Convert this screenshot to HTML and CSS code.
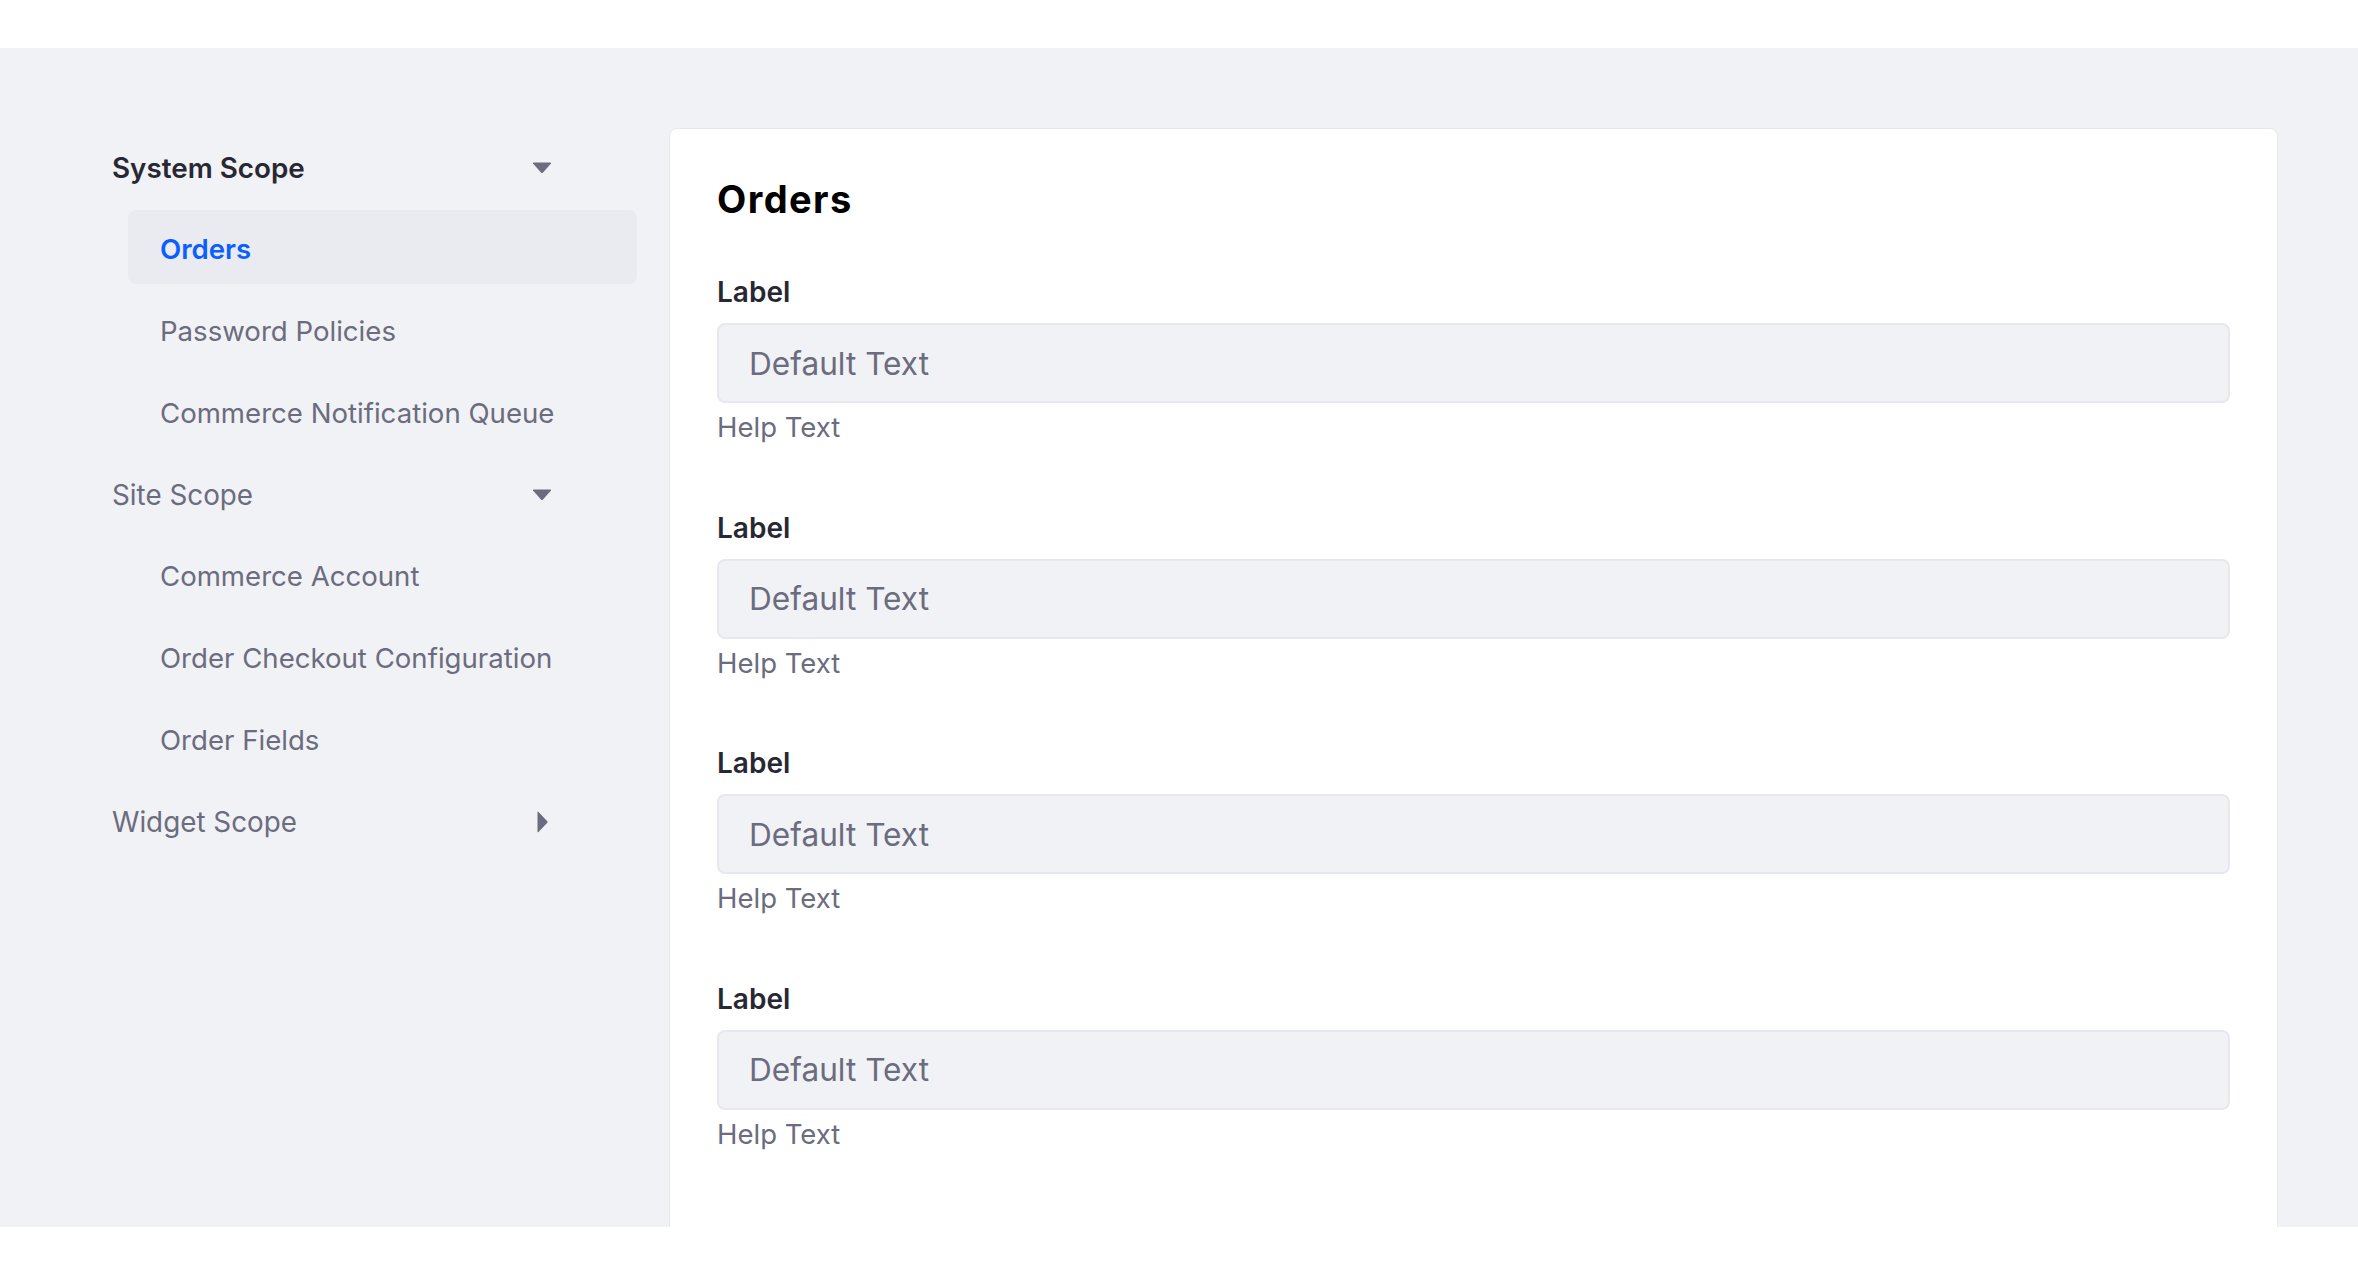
FILE: index.html
```html
<!DOCTYPE html>
<html lang="en">
<head>
<meta charset="utf-8">
<title>Orders</title>
<link rel="stylesheet" href="styles.css">
</head>
<body>
<div class="page">
  <nav class="sidebar">
    <div class="group-header active">
      <span>System Scope</span>
      <svg class="caret" width="20" height="12" viewBox="0 0 20 12"><path d="M1 1.5 Q0.6 0.5 1.8 0.5 H18.2 Q19.4 0.5 19 1.5 L10.8 10.8 Q10 11.6 9.2 10.8 Z" fill="#6b6c7e"/></svg>
    </div>
    <ul class="group-items">
      <li class="item selected">Orders</li>
      <li class="item">Password Policies</li>
      <li class="item">Commerce Notification Queue</li>
    </ul>
    <div class="group-header">
      <span>Site Scope</span>
      <svg class="caret" width="20" height="12" viewBox="0 0 20 12"><path d="M1 1.5 Q0.6 0.5 1.8 0.5 H18.2 Q19.4 0.5 19 1.5 L10.8 10.8 Q10 11.6 9.2 10.8 Z" fill="#6b6c7e"/></svg>
    </div>
    <ul class="group-items">
      <li class="item">Commerce Account</li>
      <li class="item">Order Checkout Configuration</li>
      <li class="item">Order Fields</li>
    </ul>
    <div class="group-header">
      <span>Widget Scope</span>
      <svg class="caret" width="20" height="22" viewBox="0 0 20 22"><path d="M5.5 1.5 Q5.5 0.3 6.5 1.1 L15.3 10.2 Q16 11 15.3 11.8 L6.5 20.9 Q5.5 21.7 5.5 20.5 Z" fill="#6b6c7e"/></svg>
    </div>
  </nav>
  <main class="card">
    <h1 class="title">Orders</h1>
    <div class="field">
      <div class="label">Label</div>
      <div class="input">Default Text</div>
      <div class="help">Help Text</div>
    </div>
    <div class="field">
      <div class="label">Label</div>
      <div class="input">Default Text</div>
      <div class="help">Help Text</div>
    </div>
    <div class="field">
      <div class="label">Label</div>
      <div class="input">Default Text</div>
      <div class="help">Help Text</div>
    </div>
    <div class="field">
      <div class="label">Label</div>
      <div class="input">Default Text</div>
      <div class="help">Help Text</div>
    </div>
  </main>
</div>
</body>
</html>
```
FILE: styles.css
```css
* { box-sizing: border-box; }
html, body { margin: 0; padding: 0; background: #ffffff; }
body {
  font-family: Inter, "Noto Sans", "Liberation Sans", sans-serif;
  color: #272833;
  overflow: hidden;
}
.page {
  margin-top: 48px;
  height: 1179px;
  background: #f1f2f5;
  display: flex;
  align-items: flex-start;
  gap: 32px;
  padding: 80px 80px 0 112px;
  overflow: hidden;
}
.sidebar {
  width: 525px;
  flex: none;
}
.group-header {
  width: 440px;
  height: 74px;
  margin-bottom: 7.75px;
  padding-top: 5px;
  display: flex;
  align-items: center;
  justify-content: space-between;
  font-size: 27.8px;
  line-height: 34px;
  color: #6b6c7e;
}
.group-header.active {
  color: #272833;
  font-weight: 600;
}
.caret { display: block; }
.group-items {
  list-style: none;
  margin: 0;
  padding: 0 0 0 16px;
}
.item {
  height: 74px;
  margin-bottom: 7.75px;
  padding: 5px 0 0 32px;
  display: flex;
  align-items: center;
  border-radius: 8px;
  font-size: 27.6px;
  line-height: 34px;
  color: #6b6c7e;
}
.item.selected {
  background: #e9ebf1;
  color: #0b5fff;
  font-weight: 600;
}
.card {
  flex: 1;
  min-height: 1200px;
  background: #ffffff;
  border: 1px solid #e7e7ed;
  border-radius: 8px;
  padding: 47px 47px;
}
.title {
  margin: 2px 0 56px;
  font-size: 38px;
  line-height: 43px;
  letter-spacing: 1.4px;
  font-weight: 700;
  color: #000000;
}
.field {
  margin-bottom: 67.5px;
}
.label {
  font-size: 28px;
  line-height: 31px;
  font-weight: 600;
  color: #272833;
  margin-bottom: 15px;
}
.input {
  height: 80px;
  background: #f1f2f5;
  border: 2px solid #e7e7ed;
  border-radius: 8px;
  padding-left: 30px;
  display: flex;
  align-items: center;
  font-size: 31.6px;
  color: #6b6c7e;
}
.help {
  margin-top: 6px;
  font-size: 27.5px;
  line-height: 36px;
  color: #6b6c7e;
}
```
